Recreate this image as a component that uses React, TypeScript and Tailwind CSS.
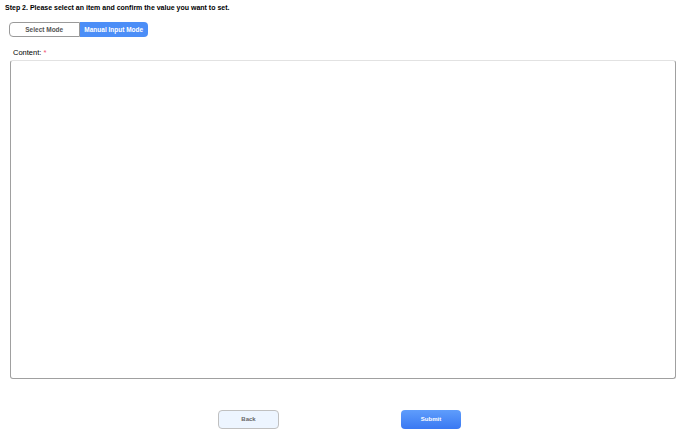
import React from "react";

export default function App() {
  return (
    <div className="w-[680px] h-[436px] bg-white flex flex-col font-['Liberation_Sans',Arial,sans-serif]">
      <div className="pl-[5px] pt-[3px] text-[7px] font-bold text-black leading-[10px]">
        Step 2. Please select an item and confirm the value you want to set.
      </div>
      <div className="flex ml-[9px] mt-[9px] h-[15px] w-[139px]">
        <div className="flex-1 flex items-center justify-center border border-[#9a9a9a] rounded-l-[4px] bg-white text-[6.5px] font-bold text-[#555]">
          Select Mode
        </div>
        <div className="flex-1 flex items-center justify-center rounded-r-[4px] bg-[#4c8ef7] text-[6.5px] font-bold text-white">
          Manual Input Mode
        </div>
      </div>
      <div className="ml-[13px] mt-[11px] text-[7.5px] leading-[9px] text-black">
        Content: <span className="text-[#f0506e]">*</span>
      </div>
      <textarea className="ml-[10px] mt-[3px] w-[666px] h-[319px] border border-[#a0a0a0] border-t-[#e2e2e2] rounded-[3px] resize-none outline-none" />
      <div className="flex mt-[31px] h-[19px]">
        <div className="ml-[218px] w-[61px] h-[19px] flex items-center justify-center bg-[#edf5ff] border border-[#c0c0c0] rounded-[4px] text-[6px] font-bold text-[#666]">
          Back
        </div>
        <div className="ml-[122px] w-[60px] h-[19px] flex items-center justify-center rounded-[4px] bg-gradient-to-b from-[#5f9dfc] to-[#3a78f2] text-[6px] font-bold text-white">
          Submit
        </div>
      </div>
    </div>
  );
}
